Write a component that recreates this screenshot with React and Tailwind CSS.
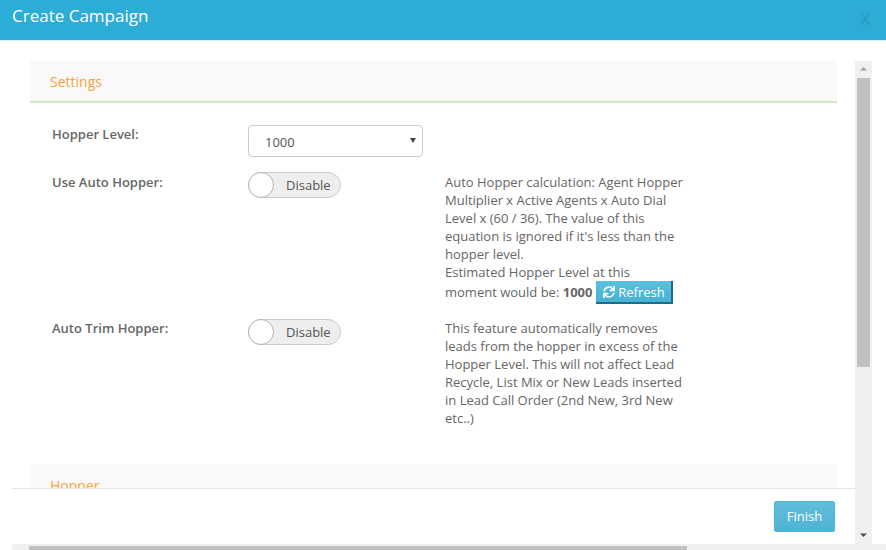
import { FaSync } from "react-icons/fa";

const Toggle = () => {
  return (
    <div className="flex items-center w-[93px] h-[26px] rounded-full border border-[#cccccc] bg-[#eeeeee]">
      <div className="w-[26px] h-[26px] -ml-px shrink-0 rounded-full border-[1.5px] border-[#b4b4b4] bg-white"></div>
      <span className="ml-[12px] text-[13px] text-[#555555]">Disable</span>
    </div>
  );
};

const SectionHead = ({ title, line }) => {
  return (
    <div
      className={`h-[42px] pl-5 pt-[2px] flex items-center bg-[#f9f9f9] text-[14px] text-[#f9a438] ${
        line ? "border-b-2 border-[#d3e6c5]" : ""
      }`}
    >
      {title}
    </div>
  );
};

const App = () => {
  return (
    <div className="w-[886px] h-[550px] flex flex-col overflow-hidden bg-white font-['Open_Sans',sans-serif] text-[13px] leading-[18px] text-[#666666]">
      <div className="h-[41px] shrink-0 flex items-start justify-between pt-[7px] pl-3 pr-[15px] bg-[#2dadd6] border-b border-[#d9eef6]">
        <h1 className="text-[17px] leading-[18px] text-white">Create Campaign</h1>
        <span className="mt-[3px] text-[16px] leading-[18px] font-bold text-[#2a9dc2]">X</span>
      </div>

      <div className="flex-1 min-h-0 flex pl-3">
        <div className="w-[843px] flex flex-col">
          <div className="h-[447px] overflow-hidden pt-5 pl-[18px] pr-[18px]">
            <SectionHead title="Settings" line />

            <div className="pl-[22px] pt-[22px]">
              <div className="flex h-[47px]">
                <label className="w-[196px] font-semibold">Hopper Level:</label>
                <div className="relative w-[175px] h-[32px]">
                  <select className="w-full h-full pt-[2px] pl-[16px] appearance-none rounded-[4px] border border-[#cccccc] bg-white text-[13px] text-[#555555]">
                    <option>1000</option>
                  </select>
                  <svg className="absolute top-[13px] right-[7px] w-[6px] h-[5px]" viewBox="0 0 6 5">
                    <path d="M0 0 L6 0 L3 5 Z" fill="#444444" />
                  </svg>
                </div>
              </div>

              <div className="flex h-[147px]">
                <label className="w-[196px] pt-[1px] font-semibold">Use Auto Hopper:</label>
                <div className="w-[197px]">
                  <Toggle />
                </div>
                <div className="w-[244px] pt-[1px]">
                  <p>
                    Auto Hopper calculation: Agent Hopper Multiplier x Active Agents x Auto Dial Level x (60 / 36). The
                    value of this equation is ignored if it's less than the hopper level.
                  </p>
                  <p>Estimated Hopper Level at this</p>
                  <p className="flex items-center h-[22px]">
                    moment would be:&nbsp;<b className="font-bold">1000</b>
                    <button className="self-start ml-[4px] w-[77px] h-[23px] shrink-0 flex items-center justify-center gap-[3px] bg-linear-to-b from-[#5bc0de] to-[#46b2d3] border-r-2 border-b-2 border-[#1b6d85] text-white">
                      <FaSync className="w-[12px] h-[12px]" />
                      Refresh
                    </button>
                  </p>
                </div>
              </div>

              <div className="flex">
                <label className="w-[196px] font-semibold">Auto Trim Hopper:</label>
                <div className="w-[197px]">
                  <Toggle />
                </div>
                <p className="w-[244px]">
                  This feature automatically removes leads from the hopper in excess of the Hopper Level. This will not
                  affect Lead Recycle, List Mix or New Leads inserted in Lead Call Order (2nd New, 3rd New etc..)
                </p>
              </div>
            </div>

            <div className="mt-[37px]">
              <SectionHead title="Hopper" />
            </div>
          </div>

          <div className="h-[56px] flex justify-end pt-3 pr-5 border-t border-[#e5e5e5]">
            <button className="w-[61px] h-[31px] pb-[2px] rounded-[2px] border border-[#46b8da] bg-linear-to-b from-[#62bdda] to-[#4fb3d5] text-[13px] text-white">
              Finish
            </button>
          </div>
        </div>

        <div className="w-[17px] mt-5 flex flex-col items-center bg-[#f0f0f0]">
          <svg className="w-[17px] h-[17px] shrink-0" viewBox="0 0 17 17">
            <path d="M5 9.5 L8.5 6 L12 9.5 Z" fill="#a3a3a3" />
          </svg>
          <div className="w-[13px] h-[289px] bg-[#c1c1c1]"></div>
          <div className="flex-1"></div>
          <svg className="w-[17px] h-[17px] shrink-0" viewBox="0 0 17 17">
            <path d="M5 6.5 L12 6.5 L8.5 10 Z" fill="#505050" />
          </svg>
        </div>
      </div>

      <div className="ml-3 h-[6px] shrink-0 flex bg-[#f0f0f0]">
        <div className="w-[17px] shrink-0"></div>
        <div className="w-[658px] h-[4px] mt-[2px] bg-[#c1c1c1]"></div>
      </div>
    </div>
  );
};

export default App;
